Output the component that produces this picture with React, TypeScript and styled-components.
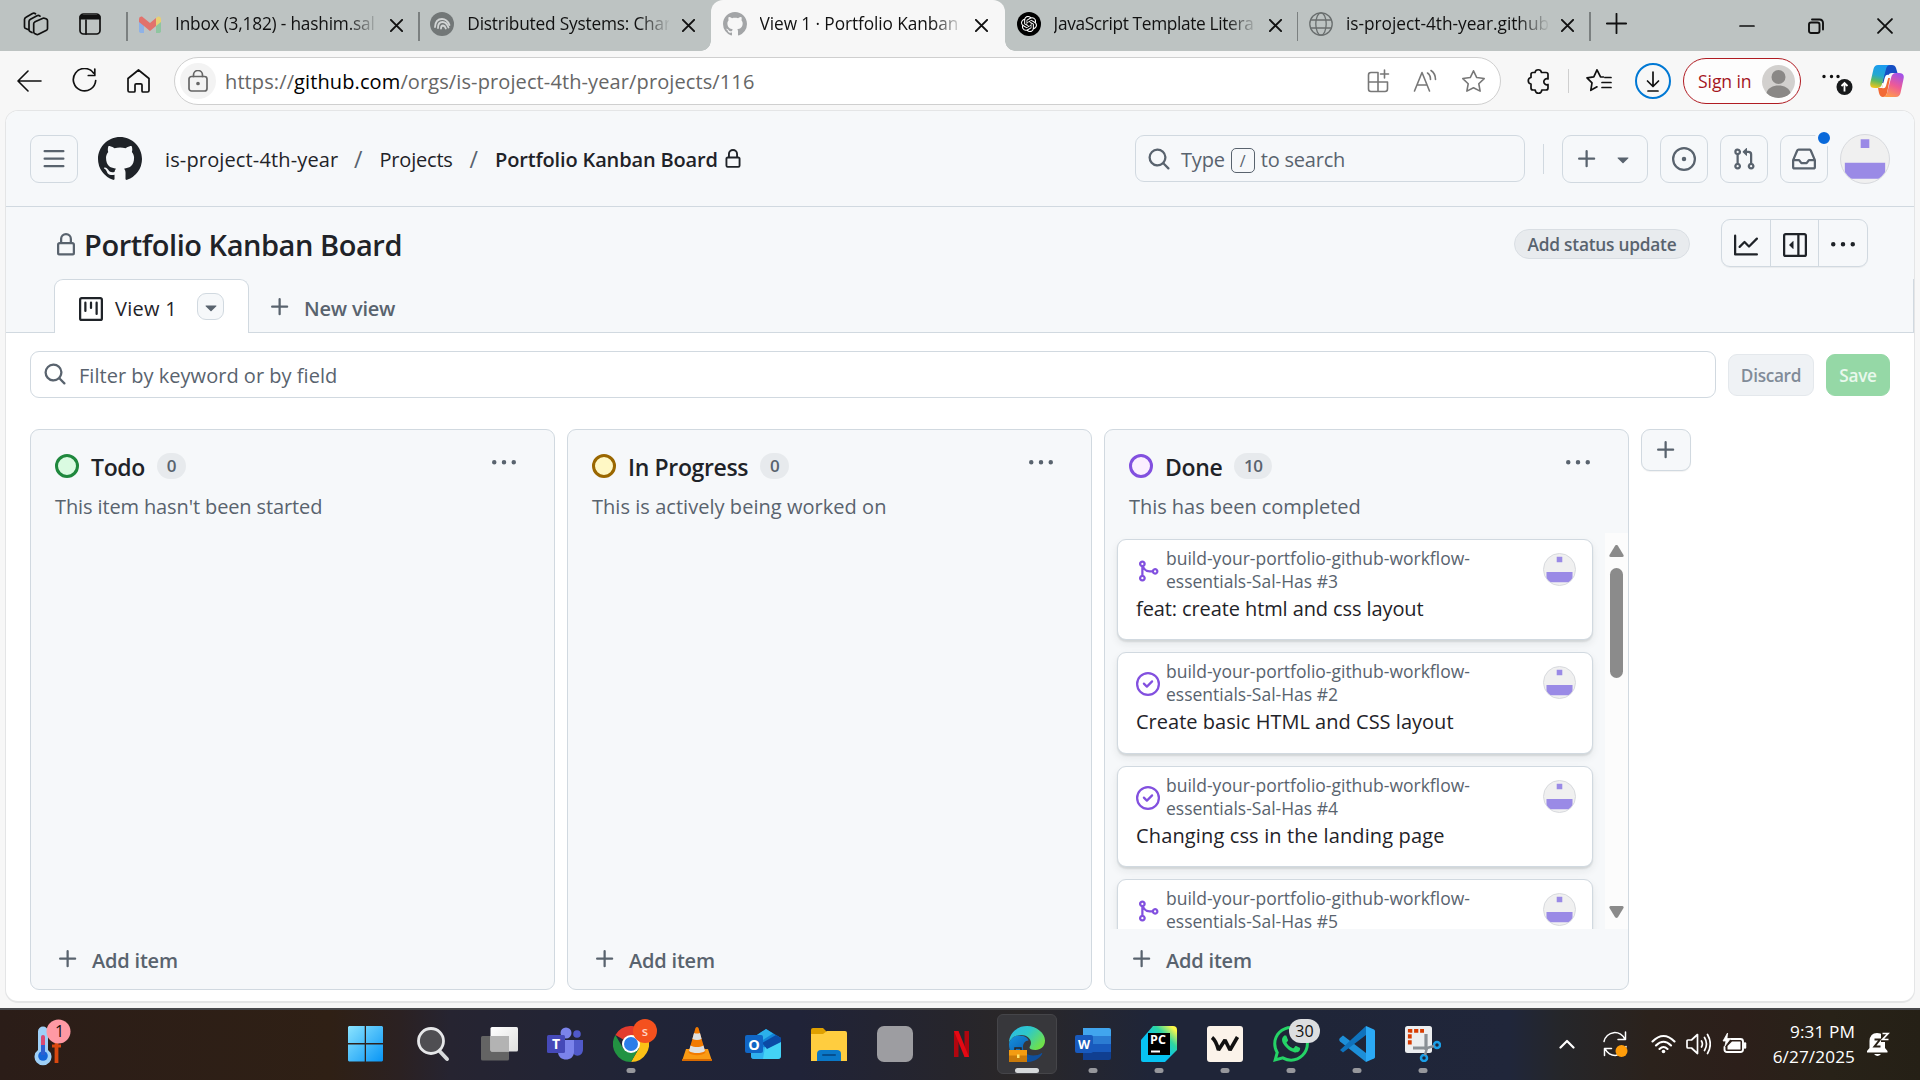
import React from "react";
import styled, { createGlobalStyle } from "styled-components";
import { SiOpenai, SiWhatsapp } from "react-icons/si";

const GlobalStyle = createGlobalStyle`
  * { box-sizing: border-box; }
  html, body { margin: 0; padding: 0; }
  body {
    width: 1920px;
    height: 1080px;
    overflow: hidden;
    background: #f7f7f7;
    font-family: "Open Sans", "Noto Sans", sans-serif;
    color: #1f2328;
  }
  svg { display: block; flex: none; }
`;

/* ---------- octicons ---------- */

const paths = {
  bars: "M1 2.75A.75.75 0 0 1 1.75 2h12.5a.75.75 0 0 1 0 1.5H1.75A.75.75 0 0 1 1 2.75Zm0 5A.75.75 0 0 1 1.75 7h12.5a.75.75 0 0 1 0 1.5H1.75A.75.75 0 0 1 1 7.75ZM1.75 12h12.5a.75.75 0 0 1 0 1.5H1.75a.75.75 0 0 1 0-1.5Z",
  plus: "M7.75 2a.75.75 0 0 1 .75.75V7h4.25a.75.75 0 0 1 0 1.5H8.5v4.25a.75.75 0 0 1-1.5 0V8.5H2.75a.75.75 0 0 1 0-1.5H7V2.75A.75.75 0 0 1 7.75 2Z",
  search: "M10.68 11.74a6 6 0 0 1-7.922-8.982 6 6 0 0 1 8.982 7.922l3.04 3.04a.749.749 0 0 1-.326 1.275.749.749 0 0 1-.734-.215ZM11.5 7a4.499 4.499 0 1 0-8.997 0A4.499 4.499 0 0 0 11.5 7Z",
  lock: "M4 4a4 4 0 0 1 8 0v2h.25c.966 0 1.75.784 1.75 1.75v5.5A1.75 1.75 0 0 1 12.25 15h-8.5A1.75 1.75 0 0 1 2 13.25v-5.5C2 6.784 2.784 6 3.75 6H4Zm8.25 3.5h-8.5a.25.25 0 0 0-.25.25v5.5c0 .138.112.25.25.25h8.5a.25.25 0 0 0 .25-.25v-5.5a.25.25 0 0 0-.25-.25ZM10.5 6V4a2.5 2.5 0 1 0-5 0v2Z",
  issue: "M8 9.5a1.5 1.5 0 1 0 0-3 1.5 1.5 0 0 0 0 3Z M8 0a8 8 0 1 1 0 16A8 8 0 0 1 8 0ZM1.5 8a6.5 6.5 0 1 0 13 0 6.5 6.5 0 0 0-13 0Z",
  pull: "M1.5 3.25a2.25 2.25 0 1 1 3 2.122v5.256a2.251 2.251 0 1 1-1.5 0V5.372A2.25 2.25 0 0 1 1.5 3.25Zm5.677-.177L9.573.677A.25.25 0 0 1 10 .854V2.5h1A2.5 2.5 0 0 1 13.5 5v5.628a2.251 2.251 0 1 1-1.5 0V5a1 1 0 0 0-1-1h-1v1.646a.25.25 0 0 1-.427.177L7.177 3.427a.25.25 0 0 1 0-.354ZM3.75 2.5a.75.75 0 1 0 0 1.5.75.75 0 0 0 0-1.5Zm0 9.5a.75.75 0 1 0 0 1.5.75.75 0 0 0 0-1.5Zm8.25.75a.75.75 0 1 0 1.5 0 .75.75 0 0 0-1.5 0Z",
  inbox: "M2.8 2.06A1.75 1.75 0 0 1 4.41 1h7.18c.7 0 1.333.417 1.61 1.06l2.74 6.395c.04.093.06.194.06.295v4.5A1.75 1.75 0 0 1 14.25 15H1.75A1.75 1.75 0 0 1 0 13.25v-4.5c0-.101.02-.202.06-.295Zm1.61.44a.25.25 0 0 0-.23.152L1.887 8H4.75a.75.75 0 0 1 .6.3L6.625 10h2.75l1.275-1.7a.75.75 0 0 1 .6-.3h2.863L11.82 2.652a.25.25 0 0 0-.23-.152Zm10.09 7h-2.875l-1.275 1.7a.75.75 0 0 1-.6.3h-3.5a.75.75 0 0 1-.6-.3L4.375 9.5H1.5v3.75c0 .138.112.25.25.25h12.5a.25.25 0 0 0 .25-.25Z",
  caret: "m4.427 7.427 3.396 3.396a.25.25 0 0 0 .354 0l3.396-3.396A.25.25 0 0 0 11.396 7H4.604a.25.25 0 0 0-.177.427Z",
  graph: "M1.5 1.75V13.5h13.75a.75.75 0 0 1 0 1.5H.75a.75.75 0 0 1-.75-.75V1.75a.75.75 0 0 1 1.5 0Zm14.28 2.53-5.25 5.25a.75.75 0 0 1-1.06 0L7 7.06 4.28 9.78a.751.751 0 0 1-1.042-.018.751.751 0 0 1-.018-1.042l3.25-3.25a.75.75 0 0 1 1.06 0L10 7.94l4.72-4.72a.751.751 0 0 1 1.042.018.751.751 0 0 1 .018 1.042Z",
  sidebar: "m4.177 7.823 2.396-2.396A.25.25 0 0 1 7 5.604v4.792a.25.25 0 0 1-.427.177L4.177 8.177a.25.25 0 0 1 0-.354Z M0 1.75C0 .784.784 0 1.75 0h12.5C15.216 0 16 .784 16 1.75v12.5A1.75 1.75 0 0 1 14.25 16H1.75A1.75 1.75 0 0 1 0 14.25Zm1.75-.25a.25.25 0 0 0-.25.25v12.5c0 .138.112.25.25.25H9.5v-13Zm12.5 13a.25.25 0 0 0 .25-.25V1.75a.25.25 0 0 0-.25-.25H11v13Z",
  kebab: "M8 9a1.5 1.5 0 1 0 0-3 1.5 1.5 0 0 0 0 3ZM1.5 9a1.5 1.5 0 1 0 0-3 1.5 1.5 0 0 0 0 3Zm13 0a1.5 1.5 0 1 0 0-3 1.5 1.5 0 0 0 0 3Z",
  project: "M1.75 0h12.5C15.216 0 16 .784 16 1.75v12.5A1.75 1.75 0 0 1 14.25 16H1.75A1.75 1.75 0 0 1 0 14.25V1.75C0 .784.784 0 1.75 0ZM1.5 1.75v12.5c0 .138.112.25.25.25h12.5a.25.25 0 0 0 .25-.25V1.75a.25.25 0 0 0-.25-.25H1.75a.25.25 0 0 0-.25.25ZM11.75 3a.75.75 0 0 1 .75.75v7.5a.75.75 0 0 1-1.5 0v-7.5a.75.75 0 0 1 .75-.75Zm-8.25.75a.75.75 0 0 1 1.5 0v5.5a.75.75 0 0 1-1.5 0ZM8 3a.75.75 0 0 1 .75.75v3.5a.75.75 0 0 1-1.5 0v-3.5A.75.75 0 0 1 8 3Z",
  merge: "M5.45 5.154A4.25 4.25 0 0 0 9.25 7.5h1.378a2.251 2.251 0 1 1 0 1.5H9.25A5.734 5.734 0 0 1 5 7.123v3.505a2.25 2.25 0 1 1-1.5 0V5.372a2.25 2.25 0 1 1 1.95-.218ZM4.25 13.5a.75.75 0 1 0 0-1.5.75.75 0 0 0 0 1.5Zm8.5-4.5a.75.75 0 1 0 0-1.5.75.75 0 0 0 0 1.5ZM5 3.25a.75.75 0 1 0 0 .005V3.25Z",
  closed: "M11.28 6.78a.75.75 0 0 0-1.06-1.06L7.25 8.69 5.78 7.22a.75.75 0 0 0-1.06 1.06l2 2a.75.75 0 0 0 1.06 0l3.5-3.5Z M16 8A8 8 0 1 1 0 8a8 8 0 0 1 16 0Zm-1.5 0a6.5 6.5 0 1 0-13 0 6.5 6.5 0 0 0 13 0Z",
  github: "M8 0c4.42 0 8 3.58 8 8a8.013 8.013 0 0 1-5.45 7.59c-.4.08-.55-.17-.55-.38 0-.27.01-1.13.01-2.2 0-.75-.25-1.23-.54-1.48 1.78-.2 3.65-.88 3.65-3.95 0-.88-.31-1.59-.82-2.15.08-.2.36-1.02-.08-2.12 0 0-.67-.22-2.2.82-.64-.18-1.32-.27-2-.27-.68 0-1.36.09-2 .27-1.53-1.03-2.2-.82-2.2-.82-.44 1.1-.16 1.92-.08 2.12-.51.56-.82 1.28-.82 2.15 0 3.06 1.86 3.75 3.64 3.95-.23.2-.44.55-.51 1.07-.46.21-1.61.55-2.33-.66-.15-.24-.6-.83-1.23-.82-.67.01-.27.38.01.53.34.19.73.9.82 1.13.16.45.68 1.31 2.69.94 0 .67.01 1.3.01 1.49 0 .21-.15.45-.55.38A7.995 7.995 0 0 1 0 8c0-4.42 3.58-8 8-8Z",
};

type IconName = keyof typeof paths;

const Octicon = ({ name, size = 24, color = "#59636e" }: { name: IconName; size?: number; color?: string }) => (
  <svg width={size} height={size} viewBox="0 0 16 16" fill={color} fillRule="evenodd">
    <path d={paths[name]} />
  </svg>
);

type LineProps = { w: number; h?: number; box?: string; sw?: number; color?: string; children: React.ReactNode };
const Line = ({ w, h = w, box, sw = 1.6, color = "#111", children }: LineProps) => (
  <svg
    width={w}
    height={h}
    viewBox={box ?? `0 0 ${w} ${h}`}
    fill="none"
    stroke={color}
    strokeWidth={sw}
    strokeLinecap="round"
    strokeLinejoin="round"
  >
    {children}
  </svg>
);

/* ---------- browser tab strip ---------- */

const Screen = styled.div`
  display: flex;
  flex-direction: column;
  width: 1920px;
  height: 1080px;
  overflow: hidden;
`;

const TabStrip = styled.div`
  display: flex;
  height: 51px;
  background: #bdc3c2;
`;

const StripTools = styled.div`
  display: flex;
  align-items: center;
  gap: 30px;
  width: 126px;
  padding: 0 0 3px 23px;
`;

const Tab = styled.div<{ $active?: boolean; $divider?: boolean }>`
  display: flex;
  align-items: center;
  position: relative;
  width: ${(p) => (p.$active ? 294 : 292.3)}px;
  height: 51px;
  padding: 0 0 3px 12px;
  color: #111;
  background: ${(p) => (p.$active ? "#f7f7f7" : "transparent")};
  border-radius: ${(p) => (p.$active ? "12px 12px 0 0" : "0")};
  &::before {
    content: "";
    position: absolute;
    left: 0;
    top: 12px;
    width: 1.5px;
    height: 29px;
    background: ${(p) => (p.$divider ? "#7b8080" : "transparent")};
  }
`;

const TabFlare = styled.i<{ $side: "left" | "right" }>`
  position: absolute;
  bottom: 0;
  ${(p) => p.$side}: -10px;
  width: 10px;
  height: 10px;
  background: radial-gradient(circle at ${(p) => (p.$side === "left" ? "0" : "100%")} 0, transparent 9.5px, #f7f7f7 10px);
`;

const TabIcon = styled.span`
  display: grid;
  place-items: center;
  width: 24px;
  height: 24px;
  flex: none;
`;

const TabLabel = styled.span<{ $spacing?: number }>`
  width: 202px;
  margin-left: 13px;
  white-space: nowrap;
  font-size: 17.3px;
  line-height: 30px;
  letter-spacing: ${(p) => p.$spacing ?? -0.2}px;
  mask-image: linear-gradient(90deg, #000 172px, transparent 204px);
`;

const TabClose = styled.span`
  display: grid;
  place-items: center;
  width: 24px;
  height: 24px;
  margin: 3px 0 0 7.5px;
`;

const NewTab = styled.div`
  display: flex;
  align-items: center;
  width: 150px;
  padding: 0 0 4px 16px;
  border-left: 1.5px solid transparent;
  position: relative;
  &::before {
    content: "";
    position: absolute;
    left: -1px;
    top: 12px;
    width: 1.5px;
    height: 29px;
    background: #7b8080;
  }
`;

const WindowButtons = styled.div`
  display: flex;
  align-items: center;
  gap: 53px;
  height: 51px;
`;

const CloseGlyph = ({ size = 13, sw = 1.8 }: { size?: number; sw?: number }) => (
  <Line w={size} sw={sw} box="0 0 12 12">
    <path d="M.8 .8 11.2 11.2M11.2 .8 .8 11.2" />
  </Line>
);

/* ---------- address bar ---------- */

const Toolbar = styled.div`
  display: flex;
  align-items: center;
  height: 59px;
  padding: 0 0 0 17px;
  background: #f7f7f7;
`;

const NavButtons = styled.div`
  display: flex;
  align-items: center;
  gap: 30px;
  width: 157px;
`;

const AddressBar = styled.div`
  display: flex;
  align-items: center;
  width: 1327px;
  height: 48px;
  padding: 0 13px 0 5px;
  margin-top: 1px;
  background: #fff;
  border: 1.5px solid #cfcfcf;
  border-radius: 24px;
`;

const SiteInfo = styled.span`
  display: grid;
  place-items: center;
  width: 36px;
  height: 36px;
  border-radius: 50%;
  background: #f3f3f3;
`;

const Url = styled.span`
  flex: 1;
  margin-left: 9px;
  font-size: 20px;
  letter-spacing: 0.11px;
  color: #666;
  white-space: nowrap;
  b { font-weight: 400; color: #000; }
`;

const AddressActions = styled.div`
  display: flex;
  align-items: center;
  gap: 23px;
`;

const ToolbarActions = styled.div`
  display: flex;
  align-items: center;
  margin-left: 25px;
  margin-top: 1px;
`;

const ToolbarRule = styled.i`
  width: 1px;
  height: 24px;
  margin: 0 17px 0 16px;
  background: #cfcfcf;
`;

const Download = styled.span`
  display: grid;
  place-items: center;
  width: 36px;
  height: 36px;
  margin-left: 23px;
  border: 2.5px solid #0078d4;
  border-radius: 50%;
`;

const SignIn = styled.div`
  display: flex;
  align-items: center;
  justify-content: space-between;
  width: 118px;
  height: 46px;
  margin-left: 12px;
  padding: 0 5px 0 14px;
  border: 1.5px solid #b01b22;
  border-radius: 23px;
  background: #fdfdfd;
  color: #a4161d;
  font-size: 17.6px;
  letter-spacing: -0.1px;
  white-space: nowrap;
`;

const MoreMenu = styled.span`
  margin: 4px 0 0 20px;
`;

const Copilot = styled.span`
  margin-left: 17px;
`;

/* ---------- github page ---------- */

const PageFrame = styled.div`
  height: 898px;
  padding: 0 5px 5px;
  background: #f7f7f7;
`;

const Page = styled.div`
  display: flex;
  flex-direction: column;
  width: 1910px;
  height: 893px;
  overflow: hidden;
  background: #fff;
  border: 1px solid #e4e5e6;
  border-bottom-width: 2px;
  border-radius: 13px;
`;

const GlobalHeader = styled.header`
  display: flex;
  align-items: flex-start;
  height: 96px;
  padding: 24px 24px 0 24px;
  background: #f6f8fa;
  border-bottom: 1.5px solid #d1d9e0;
`;

const IconButton = styled.button<{ $width?: number }>`
  display: flex;
  align-items: center;
  justify-content: center;
  gap: 12px;
  position: relative;
  flex: none;
  width: ${(p) => p.$width ?? 48}px;
  height: 48px;
  padding: 0;
  background: transparent;
  border: 1.5px solid #d1d9e0;
  border-radius: 9px;
`;

const Logo = styled.span`
  margin: 2px 0 0 20px;
`;

const Breadcrumbs = styled.nav`
  display: flex;
  align-items: center;
  height: 48px;
  margin-left: 23px;
  font-size: 20px;
  white-space: nowrap;
`;

const Crumb = styled.span<{ $width: number; $spacing: number; $current?: boolean }>`
  width: ${(p) => p.$width}px;
  font-weight: ${(p) => (p.$current ? 600 : 400)};
  letter-spacing: ${(p) => p.$spacing}px;
`;

const Slash = styled.span`
  width: 42.5px;
  padding-left: 17px;
  color: #59636e;
  font-size: 23px;
  line-height: 30px;
`;

const SearchBox = styled.div`
  display: flex;
  align-items: center;
  width: 390px;
  height: 47px;
  margin-left: auto;
  padding-left: 11px;
  border: 1.5px solid #d1d9e0;
  border-radius: 9px;
  color: #59636e;
  font-size: 20px;
  letter-spacing: -0.2px;
  white-space: nowrap;
`;

const SearchText = styled.span`
  margin: 2px 0 0 10px;
`;

const SearchTail = styled.span`
  margin-top: 2px;
`;

const Kbd = styled.kbd`
  display: grid;
  place-items: center;
  width: 24px;
  height: 25px;
  margin: 4px 6px 0;
  border: 1.5px solid #59636e;
  border-radius: 5px;
  font: 16px "Open Sans", sans-serif;
`;

const HeaderRule = styled.i`
  width: 1px;
  height: 30px;
  margin: 9px 18px 0;
  background: #d1d9e0;
`;

const HeaderActions = styled.div`
  display: flex;
  gap: 12px;
`;

const UnreadDot = styled.i`
  position: absolute;
  right: -6px;
  top: -7px;
  width: 18px;
  height: 18px;
  border: 3px solid #f6f8fa;
  border-radius: 50%;
  background: #0969da;
`;

const AvatarRing = styled.span<{ $size: number }>`
  display: block;
  flex: none;
  width: ${(p) => p.$size}px;
  height: ${(p) => p.$size}px;
  overflow: hidden;
  border: 1.5px solid #d8dade;
  border-radius: 50%;
  background: #f0f0f0;
  svg { width: 100%; height: 100%; }
`;

const Avatar = ({ size }: { size: number }) => (
  <AvatarRing $size={size}>
    <svg viewBox="0 0 50 50">
      <path fill="#9a8ae6" d="M20.5 4.5h9v9h-9zM4 29h42v16.5H4z" />
    </svg>
  </AvatarRing>
);

const AccountAvatar = styled.div`
  margin: -1px 0 0 0;
`;

const ProjectHeader = styled.div`
  display: flex;
  align-items: flex-start;
  height: 72px;
  padding: 12px 46px 0 48px;
  background: #f6f8fa;
`;

const ProjectTitle = styled.h1`
  display: flex;
  align-items: center;
  height: 49px;
  gap: 6px;
  margin: 1px auto 0 0;
  font-size: 29px;
  font-weight: 600;
  letter-spacing: -0.45px;
  white-space: nowrap;
`;

const StatusPill = styled.span`
  display: flex;
  align-items: center;
  justify-content: center;
  width: 176px;
  height: 30px;
  margin: 10px 31px 0 0;
  border: 1px solid #d9dee3;
  border-radius: 15px;
  background: #e8ebee;
  color: #59636e;
  font-size: 17.3px;
  font-weight: 600;
  letter-spacing: -0.23px;
  white-space: nowrap;
`;

const ButtonGroup = styled.div`
  display: flex;
  width: 147px;
  height: 48px;
  border: 1.5px solid #d1d9e0;
  border-radius: 9px;
  box-shadow: 0 1px 1px rgba(31, 35, 40, 0.06);
`;

const GroupButton = styled.span`
  display: grid;
  place-items: center;
  flex: 1;
  padding-top: 3px;
  & + & { border-left: 1.5px solid #d1d9e0; }
`;

const ViewTabs = styled.div`
  display: flex;
  height: 54px;
  padding-left: 48px;
  background: linear-gradient(#d1d9e0, #d1d9e0) 0 100% / 100% 1.5px no-repeat, #f6f8fa;
  border-right: 1.5px solid #d1d9e0;
`;

const ViewTab = styled.div`
  display: flex;
  align-items: center;
  width: 195px;
  height: 54px;
  padding: 4px 0 0 24px;
  background: #fff;
  border: 1.5px solid #d1d9e0;
  border-bottom: 0;
  border-radius: 9px 9px 0 0;
  font-size: 20px;
  white-space: nowrap;
`;

const ViewName = styled.span`
  width: 82px;
  padding-left: 12px;
  letter-spacing: 0.25px;
`;

const ViewMenu = styled.span`
  display: grid;
  place-items: center;
  width: 27px;
  height: 27px;
  margin: -4px 0 0 12px;
  border: 1.5px solid #d1d9e0;
  border-radius: 9px;
  background: #f6f8fa;
`;

const NewView = styled.div`
  display: flex;
  align-items: center;
  gap: 12px;
  padding: 4px 0 0 19px;
  color: #59636e;
  font-size: 20px;
  font-weight: 600;
  letter-spacing: -0.2px;
  white-space: nowrap;
  svg { margin-top: -3px; }
`;

const FilterRow = styled.div`
  display: flex;
  align-items: center;
  gap: 12px;
  height: 47px;
  margin: 18px 23px 0 24px;
`;

const FilterInput = styled.div`
  display: flex;
  align-items: center;
  gap: 12px;
  width: 1686px;
  height: 47px;
  padding: 1px 0 0 12px;
  border: 1.5px solid #d1d9e0;
  border-radius: 9px;
  color: #59636e;
  font-size: 20px;
  letter-spacing: 0.02px;
  white-space: nowrap;
  svg { margin-top: -2px; }
`;

const FilterButton = styled.button<{ $primary?: boolean }>`
  width: ${(p) => (p.$primary ? 64 : 86)}px;
  height: 42px;
  padding: 1px 0 0;
  border: 1px solid ${(p) => (p.$primary ? "#95d8a6" : "#e4e8ec")};
  border-radius: 9px;
  background: ${(p) => (p.$primary ? "#95d8a6" : "#eff2f5")};
  color: ${(p) => (p.$primary ? "#e9f8ed" : "#818b98")};
  font-family: inherit;
  font-size: 17.2px;
  font-weight: 600;
  letter-spacing: -0.3px;
`;

const Board = styled.main`
  display: flex;
  gap: 12px;
  margin: 31px 0 0 24px;
`;

const ColumnBox = styled.section`
  display: flex;
  flex-direction: column;
  width: 525px;
  height: 561px;
  overflow: hidden;
  border: 1.5px solid #d1d9e0;
  border-radius: 9px;
  background: #f6f8fa;
`;

const ColumnHead = styled.div`
  display: flex;
  align-items: center;
  height: 33px;
  margin: 19px 38px 0 24px;
`;

const StatusDot = styled.i<{ $ring: string; $fill: string }>`
  width: 24px;
  height: 24px;
  flex: none;
  border: 3px solid ${(p) => p.$ring};
  border-radius: 50%;
  background: ${(p) => p.$fill};
`;

const ColumnName = styled.h2`
  margin: 3px 12px 0 12px;
  font-size: 23px;
  font-weight: 600;
  letter-spacing: -0.35px;
  white-space: nowrap;
`;

const Count = styled.span`
  display: grid;
  place-items: center;
  height: 26px;
  padding: 0 9.7px;
  border-radius: 13px;
  background: #e7eaed;
  color: #59636e;
  font-size: 17px;
  font-weight: 600;
  letter-spacing: -0.4px;
`;

const HeadMenu = styled.span`
  margin: -6px 0 0 auto;
`;

const ColumnNote = styled.p<{ $spacing: number }>`
  height: 30px;
  margin: 10px 0 0 24px;
  color: #59636e;
  font-size: 20px;
  line-height: 30px;
  letter-spacing: ${(p) => p.$spacing}px;
  white-space: nowrap;
`;

const ColumnBody = styled.div`
  display: flex;
  justify-content: space-between;
  height: 396px;
  margin-top: 11px;
  overflow: hidden;
`;

const CardList = styled.div`
  display: flex;
  flex-direction: column;
  gap: 12px;
  padding: 6px 0 0 12px;
`;

const Card = styled.article`
  flex: none;
  width: 476px;
  height: 101.3px;
  padding: 7px 17px 0 18px;
  border: 1.5px solid #d1d9e0;
  border-radius: 9px;
  background: #fff;
  box-shadow: 0 1.5px 1.5px rgba(31, 35, 40, 0.1), 0 4px 8px rgba(31, 35, 40, 0.08);
`;

const CardTop = styled.div`
  display: flex;
  align-items: flex-start;
`;

const CardIcon = styled.span`
  margin: 12px 6px 0 0;
`;

const CardRepo = styled.span`
  width: 340px;
  color: #59636e;
  font-size: 17.5px;
  line-height: 23px;
`;

const CardAvatar = styled.span`
  margin: 6px -1px 0 auto;
`;

const CardTitle = styled.h3<{ $spacing: number }>`
  margin: 2px 0 0 0;
  font-size: 20px;
  font-weight: 400;
  line-height: 28px;
  letter-spacing: ${(p) => p.$spacing}px;
  white-space: nowrap;
`;

const Scrollbar = styled.div`
  display: flex;
  flex-direction: column;
  align-items: center;
  width: 23px;
  height: 396px;
  padding: 12px 0 11px;
  background: #fcfcfc;
`;

const Thumb = styled.i`
  width: 13px;
  height: 110px;
  margin: 11px 0 auto;
  border-radius: 7px;
  background: #8b8b8b;
`;

const AddItem = styled.div`
  display: flex;
  align-items: center;
  gap: 12px;
  height: 60px;
  padding: 2px 0 0 25px;
  color: #59636e;
  font-size: 20px;
  font-weight: 600;
  letter-spacing: -0.2px;
  svg { margin-top: -2px; }
`;

const AddColumn = styled.button`
  display: grid;
  place-items: center;
  width: 50px;
  height: 42px;
  padding: 0;
  border: 1.5px solid #d1d9e0;
  border-radius: 9px;
  background: #f6f8fa;
  box-shadow: 0 1px 1px rgba(31, 35, 40, 0.06);
`;

type CardData = { icon: IconName; ref: number; title?: string; spacing?: number };

const cards: CardData[] = [
  { icon: "merge", ref: 3, title: "feat: create html and css layout", spacing: -0.1 },
  { icon: "closed", ref: 2, title: "Create basic HTML and CSS layout", spacing: 0.02 },
  { icon: "closed", ref: 4, title: "Changing css in the landing page", spacing: 0.14 },
  { icon: "merge", ref: 5 },
];

type ColumnData = { name: string; count: number; note: string; spacing: number; ring: string; fill: string; cards: CardData[] };

const columns: ColumnData[] = [
  { name: "Todo", count: 0, note: "This item hasn't been started", spacing: -0.12, ring: "#1f883d", fill: "#dafbe1", cards: [] },
  { name: "In Progress", count: 0, note: "This is actively being worked on", spacing: 0.04, ring: "#9a6700", fill: "#fff8c5", cards: [] },
  { name: "Done", count: 10, note: "This has been completed", spacing: -0.04, ring: "#8250df", fill: "#fbefff", cards },
];

const Column = ({ data }: { data: ColumnData }) => (
  <ColumnBox>
    <ColumnHead>
      <StatusDot $ring={data.ring} $fill={data.fill} />
      <ColumnName>{data.name}</ColumnName>
      <Count>{data.count}</Count>
      <HeadMenu><Octicon name="kebab" /></HeadMenu>
    </ColumnHead>
    <ColumnNote $spacing={data.spacing}>{data.note}</ColumnNote>
    <ColumnBody>
      {data.cards.length > 0 && (
        <>
          <CardList>
            {data.cards.map((c) => (
              <Card key={c.ref}>
                <CardTop>
                  <CardIcon><Octicon name={c.icon} color="#8250df" /></CardIcon>
                  <CardRepo>build-your-portfolio-github-workflow-<br />essentials-Sal-Has #{c.ref}</CardRepo>
                  <CardAvatar><Avatar size={33} /></CardAvatar>
                </CardTop>
                {c.title && <CardTitle $spacing={c.spacing ?? 0}>{c.title}</CardTitle>}
              </Card>
            ))}
          </CardList>
          <Scrollbar>
            <svg width="15" height="12"><path d="M7.5 0c.8 0 1.3.6 1.7 1.2L14.5 10c.5 1-.1 2-1.2 2H1.7C.6 12 0 11 .5 10L5.8 1.2C6.2.6 6.7 0 7.5 0Z" fill="#8b8b8b" /></svg>
            <Thumb />
            <svg width="15" height="12"><path d="M7.5 12c.8 0 1.3-.6 1.7-1.2L14.5 2c.5-1-.1-2-1.2-2H1.7C.6 0 0 1 .5 2L5.8 10.800C6.2 11.4 6.7 12 7.500 12Z" fill="#8b8b8b" /></svg>
          </Scrollbar>
        </>
      )}
    </ColumnBody>
    <AddItem><Octicon name="plus" />Add item</AddItem>
  </ColumnBox>
);

/* ---------- taskbar ---------- */

const Taskbar = styled.footer`
  display: flex;
  align-items: center;
  height: 72px;
  padding-bottom: 2px;
  border-top: 2px solid #48484b;
  background: linear-gradient(90deg, #2b1d18 0, #2f2015 330px, #2b2122 400px, #262431 450px, #202437 640px, #202338 800px, #26252c 950px, #2a2727 1020px, #242631 1090px, #1f2538 1150px, #1f2538 1300px, #20263a 1510px, #25262a 1560px, #2b221c 1650px, #2c1f1a 1740px, #282218 1830px, #252016 1920px);
`;

const Weather = styled.div`
  width: 334px;
  padding: 0 0 4px 32px;
`;

const Apps = styled.div`
  display: flex;
`;

const AppSlot = styled.div<{ $active?: boolean }>`
  display: grid;
  place-items: center;
  position: relative;
  width: 60px;
  height: 60px;
  margin: 0 3px;
  border: 1px solid ${(p) => (p.$active ? "#454549" : "transparent")};
  border-radius: 6px;
  background: ${(p) => (p.$active ? "#37373b" : "transparent")};
`;

const RunMark = styled.i<{ $active?: boolean }>`
  position: absolute;
  bottom: 0;
  left: 50%;
  width: ${(p) => (p.$active ? 24 : 9)}px;
  height: 5px;
  transform: translateX(-50%);
  border-radius: 3px;
  background: ${(p) => (p.$active ? "#d6d9da" : "#96979c")};
`;

const Badge = styled.span<{ $tone: "red" | "grey"; $wide?: boolean }>`
  display: grid;
  place-items: center;
  position: absolute;
  top: 4px;
  left: ${(p) => (p.$wide ? 27 : 31)}px;
  width: ${(p) => (p.$wide ? 31 : 24)}px;
  height: 24px;
  border-radius: 12px;
  background: ${(p) => (p.$tone === "red" ? "#f4511e" : "#dcdee0")};
  color: ${(p) => (p.$tone === "red" ? "#ffd2c2" : "#111")};
  font-size: ${(p) => (p.$tone === "red" ? 13 : 16)}px;
  font-weight: ${(p) => (p.$tone === "red" ? 600 : 400)};
  line-height: 24px;
`;

const Tray = styled.div`
  display: flex;
  align-items: center;
  margin-left: auto;
  padding-right: 30px;
`;

const TrayItem = styled.span<{ $gap: number }>`
  margin-left: ${(p) => p.$gap}px;
`;

const Clock = styled.div`
  width: 100px;
  margin: 1px 12px 0 8px;
  color: #fff;
  font-size: 17.2px;
  line-height: 24.5px;
  letter-spacing: 0.1px;
  text-align: right;
`;

const Windows = () => (
  <svg width="38" height="36" viewBox="0 0 38 36">
    <defs><linearGradient id="win" x1="0" y1="0" x2="1" y2="1"><stop stopColor="#8be4ff" /><stop offset="1" stopColor="#0895f5" /></linearGradient></defs>
    <path fill="url(#win)" d="M1 0h15.7v17H0V1zM18 0h16l1 1v16H18zM0 18.5h16.7V35.500H1l-1-1zM18 18.500h17V34.500l-1 1H18z" />
  </svg>
);
const Search = () => (
  <svg width="36" height="36" viewBox="0 0 36 36" fill="none">
    <path d="m24 24.5 8 8.500" stroke="#d8dadc" strokeWidth="4" strokeLinecap="round" />
    <circle cx="16" cy="15" r="12.500" fill="#4f4e52" stroke="#e6e7e9" strokeWidth="2.800" />
  </svg>
);
const TaskView = () => (
  <svg width="37" height="36" viewBox="0 0 37 36">
    <defs><linearGradient id="tv" x2="1" y2="1"><stop stopColor="#fff" /><stop offset="1" stopColor="#dedede" /></linearGradient></defs>
    <rect y="10" width="28" height="24.500" rx="1.500" fill="#646464" /><rect x="9.500" y="1" width="27.500" height="24.500" rx="1.500" fill="url(#tv)" /><path d="M9.500 10H28v15.500H11a1.500 1.500 0 0 1-1.500-1.500Z" fill="#b3b3b3" />
  </svg>
);
const Teams = () => (
  <svg width="36" height="34" viewBox="0 0 36 34">
    <circle cx="30" cy="7" r="3.800" fill="#5059c9" /><path d="M26 13h10v9c0 8-8 8-10 4Z" fill="#5059c9" />
    <circle cx="19" cy="6" r="5.500" fill="#7b83eb" /><path d="M11 13h16v12c0 10-16 10-16 0Z" fill="#7b83eb" />
    <rect y="8" width="18" height="18" rx="1.500" fill="#4549b8" /><text x="9" y="22" fill="#fff" fontSize="14" fontWeight="700" textAnchor="middle">T</text>
  </svg>
);
const Chrome = () => (
  <svg width="36" height="36" viewBox="0 0 36 36">
    <path d="M18 18 2.400 9A18 18 0 0 1 33.600 9Z" fill="#e33b2e" /><path d="M18 9h15.600A18 18 0 0 1 18 36l7.800-13.500Z" fill="#fbc116" /><path d="M2.400 9A18 18 0 0 0 18 36l7.800-13.500L18 27l-7.800-4.500Z" fill="#229342" />
    <circle cx="18" cy="18" r="9" fill="#fff" /><circle cx="18" cy="18" r="7" fill="#2b7de9" />
  </svg>
);
const Vlc = () => (
  <svg width="30" height="34" viewBox="0 0 30 34">
    <path d="M4 22h22l4 12H0z" fill="#f99a14" /><path d="M0 32h30v2H0Z" fill="#d96a00" /><path d="M13.500 1q1.500-2 3 0l7 24.500c-3 3.500-14 3.500-17 0Z" fill="#f27a00" />
    <path d="m12 6-1.600 6c3 1.300 6.200 1.300 9.200 0L18 6c-2 .8-4 .8-6 0ZM8.500 18.500 7 24c4 2.800 12 2.800 16 0l-1.500-5.500c-4 2-9 2-13 0Z" fill="#dfe0e0" />
  </svg>
);
const Outlook = () => (
  <svg width="37" height="31" viewBox="0 0 37 31">
    <path d="M6 10 21 0l15 9v18c0 2-1.500 3-3 3H9c-2 0-3-1-3-3Z" fill="#1284d8" /><path d="M6 10 21 0l7 4.500L10 16Z" fill="#2bb0ea" /><path d="m20 18 16-9v18c0 2-1.500 3-3 3H14Z" fill="#43d2f5" /><path d="m17 14 14-8 5 3v4L22 20Z" fill="#0b4aa5" /><path d="M6 20v7c0 2 1 3 3 3h9L20 18Z" fill="#2fb0ee" />
    <rect y="6" width="18" height="18" rx="2" fill="#1066c5" /><text x="9" y="20.500" fill="#fff" fontSize="14.500" fontWeight="700" textAnchor="middle">O</text>
  </svg>
);
const Explorer = () => (
  <svg width="36" height="33" viewBox="0 0 36 33">
    <path d="M0 2q0-2 2-2h10l4 4v6H0Z" fill="#dfa000" /><path d="M0 6h12l4-3h18q2 0 2 2v28H0Z" fill="#ffcd3f" /><path d="M6 33v-7q0-4 4-4h16q4 0 4 4v7Z" fill="#0a78c8" /><rect x="11" y="26" width="14" height="2" rx="1" fill="#054f8f" />
  </svg>
);
const Blank = () => <svg width="36" height="36"><rect width="36" height="36" rx="7" fill="#9d9da1" /></svg>;
const Netflix = () => (
  <svg width="15" height="26" viewBox="0 0 15 26"><path d="M0 0h4.500v26L0 26ZM10.500 0H15v26h-4.500Z" fill="#b1060f" /><path d="M0 0h4.500L15 26h-4.500Z" fill="#e50914" /></svg>
);
const Edge = () => (
  <svg width="36" height="36" viewBox="0 0 36 36">
    <defs>
      <linearGradient id="eg" x2="1" y2=".6"><stop stopColor="#2cb8e8" /><stop offset=".5" stopColor="#2ec9c9" /><stop offset="1" stopColor="#6fe04b" /></linearGradient>
      <linearGradient id="eb" x2=".6" y2="1"><stop stopColor="#1593df" /><stop offset="1" stopColor="#0b57ad" /></linearGradient>
    </defs>
    <path d="M13 20c0 6 5 9.500 11 9.500 3.500 0 6.500-1 8.300-2.300.8-.4 1.200.3.700 1C30 33 24.500 36 18 36c-6 0-10-6-8-13Z" fill="#0f4f9c" />
    <path d="M0 18c1-5 5-8.500 10-8.500 6 0 9.500 3 9.500 5-3.500 0-5.500 3-5.500 6.500 0 5.500 3 9 6 11.500L12 35C5 33 0 27 0 18Z" fill="url(#eb)" />
    <path d="M0 17C0 7 8 0 18 0s18 7.500 18 14.500c0 6-4.500 9.500-9.500 9.500-4 0-6-1.200-6-2.500 0-1 1.500-2 1.500-4.500 0-4.500-4.500-8-10-8C6 9 1.500 12.500 0 17Z" fill="url(#eg)" />
    <path d="M0 24h18v12H0Z" fill="#c97a0a" /><path d="M0 24h18v5.500H0Z" fill="#f39c12" /><path d="M6 24v-2h6v2" stroke="#2a2320" fill="none" strokeWidth="1.500" /><rect x="8" y="28.500" width="2.500" height="3.500" fill="#ffe36b" />
  </svg>
);
const Word = () => (
  <svg width="36" height="32" viewBox="0 0 36 32">
    <path d="M8 0h26q2 0 2 2v6H8Z" fill="#41a5ee" /><path d="M8 8h28v8H8Z" fill="#2b7cd3" /><path d="M8 16h28v8H8Z" fill="#185abd" /><path d="M8 24h28v6q0 2-2 2H8Z" fill="#103f91" />
    <rect y="7" width="18" height="18" rx="2" fill="#185abd" /><text x="9" y="20.500" fill="#fff" fontSize="12.500" fontWeight="700" textAnchor="middle">W</text>
  </svg>
);
const PyCharm = () => (
  <svg width="36" height="36" viewBox="0 0 36 36">
    <defs><linearGradient id="pc" x1="0" y1="1" x2="1" y2="0"><stop offset=".45" stopColor="#07c3f2" /><stop offset=".7" stopColor="#2fd6a0" /><stop offset=".92" stopColor="#fcf84a" /></linearGradient></defs>
    <path d="M12 0h20q4 0 4 4v20L24 36H2q-2 0-2-2V14Z" fill="url(#pc)" /><path d="M7 7h22v22H7Z" fill="#000" />
    <text x="17" y="18" fill="#fff" fontSize="12.500" fontWeight="700" textAnchor="middle">PC</text><path d="M10 24.500h9v2h-9Z" fill="#fff" />
  </svg>
);
const Wattpad = () => (
  <svg width="36" height="36"><rect width="36" height="36" rx="3" fill="#fbf3ea" /><path d="M5 11.500q4 3 6.500 12.500L18 14l5 10 7.500-13" fill="none" stroke="#111" strokeWidth="3.600" strokeLinejoin="bevel" /></svg>
);
const VsCode = () => (
  <svg width="36" height="36" viewBox="0 0 36 36">
    <path d="m1 12 3-2.500L27 27v9L1 15.500Q-.5 13.500 1 12Z" fill="#1d8fd8" /><path d="m1 24 26-24v9L4 26.500 1 24Q-.5 22 1 24Z" fill="#0f73bd" /><path d="m27 0 8 3.500q1 .5 1 1.500v26q0 1-1 1.500L27 36Z" fill="#2ba9f5" />
  </svg>
);
const Snip = () => (
  <svg width="36" height="36" viewBox="0 0 36 36">
    <rect width="27" height="27" rx="2.500" fill="#eceef0" /><path d="M4.800 18.500V4.800H19" stroke="#d83b01" strokeWidth="3.800" strokeDasharray="4.200 1.800" fill="none" /><path d="M8 22h14M21 8v16" stroke="#8a9096" strokeWidth="3.200" /><circle cx="32" cy="19" r="3" stroke="#1a9fe8" strokeWidth="2.500" fill="none" /><circle cx="19" cy="32" r="3" stroke="#1a9fe8" strokeWidth="2.500" fill="none" /><path d="m22 22 7-2M22 22l-2 7" stroke="#8a9096" strokeWidth="2.500" />
  </svg>
);

type App = { key: string; icon: React.ReactNode; run?: boolean; active?: boolean; badge?: string; tone?: "red" | "grey" };

const apps: App[] = [
  { key: "start", icon: <Windows /> },
  { key: "search", icon: <Search /> },
  { key: "taskview", icon: <TaskView /> },
  { key: "teams", icon: <Teams /> },
  { key: "chrome", icon: <Chrome />, run: true, badge: "s", tone: "red" },
  { key: "vlc", icon: <Vlc /> },
  { key: "outlook", icon: <Outlook /> },
  { key: "explorer", icon: <Explorer /> },
  { key: "blank", icon: <Blank /> },
  { key: "netflix", icon: <Netflix /> },
  { key: "edge", icon: <Edge />, run: true, active: true },
  { key: "word", icon: <Word />, run: true },
  { key: "pycharm", icon: <PyCharm />, run: true },
  { key: "w", icon: <Wattpad />, run: true },
  { key: "whatsapp", icon: <SiWhatsapp size={36} color="#25d366" />, run: true, badge: "30", tone: "grey" },
  { key: "vscode", icon: <VsCode />, run: true },
  { key: "snip", icon: <Snip />, run: true },
];

const Star = "M12 2.5l2.9 6 6.6.9-4.8 4.6 1.2 6.6L12 17.500l-5.900 3.100 1.200-6.600L2.500 9.400l6.600-.9Z";

export default function App() {
  return (
    <Screen>
      <GlobalStyle />
      <TabStrip>
        <StripTools>
          <Line w={26} h={30} box="0 -1 26 26" sw={1.7}>
            <path d="M5 17.5 2.700 16.500A1.500 1.500 0 0 1 1.500 15V7.500Q1.500 6 3 5.200L9.500 1.500q1.500-.8 3 .3M9 20.500l-2-1Q6 19 6 17.500V9.500Q6 8 7.500 7.200L14 3.800q1.600-.8 3 .4M12 9.800l8-3.600q1-.4 2.200.2l1.300.7q1 .6 1 1.700v8q0 1-1 1.500l-8 4q-1.200.6-2.300 0l-1.500-.8q-1-.6-1-1.800v-8q0-1.200 1.300-1.700Z" />
          </Line>
          <Line w={22} h={22} sw={1.7}><rect x="1" y="1" width="20" height="20" rx="3.500" /><path d="M2 3.500h18M2 5h18" strokeWidth="3" /><path d="M7 7v14" /></Line>
        </StripTools>
        <Tab $divider>
          <TabIcon><svg width="22" height="17" viewBox="0 0 22 17"><path fill="#8fb2e6" d="M0 3h5v14H1.500L0 16Z" /><path fill="#8fc5a0" d="M17 3h5v13l-1.500 1H17Z" /><path fill="#e8cf74" d="M17 2l2-1.500Q22 0 22 3v3l-5 4Z" /><path fill="#e2726c" d="M0 3Q0 0 3 .5L11 7l6-5v8l-6 5-6-5-5-4Z" /></svg></TabIcon>
          <TabLabel $spacing={-0.2}>Inbox (3,182) - hashim.sal</TabLabel>
          <TabClose><CloseGlyph /></TabClose>
        </Tab>
        <Tab $divider>
          <TabIcon><svg width="24" height="24" viewBox="0 0 24 24" fill="none" stroke="#d2d5d5" strokeWidth="1.800" strokeLinecap="round"><circle cx="12" cy="12" r="12" fill="#727777" stroke="none" /><path d="M5 15q.5-8 7-8 5 0 7.500 6M8 16q0-6 4.500-6 4 0 6 5.500M11 16.500q0-3 2-3 2 .3 2.800 3" /></svg></TabIcon>
          <TabLabel $spacing={-0.2}>Distributed Systems: Char</TabLabel>
          <TabClose><CloseGlyph /></TabClose>
        </Tab>
        <Tab $active>
          <TabFlare $side="left" />
          <TabFlare $side="right" />
          <TabIcon><Octicon name="github" color="#a3a5a7" /></TabIcon>
          <TabLabel $spacing={-0.1}>View 1 · Portfolio Kanban</TabLabel>
          <TabClose><CloseGlyph /></TabClose>
        </Tab>
        <Tab>
          <TabIcon><svg width="24" height="24"><circle cx="12" cy="12" r="12" fill="#000" /><foreignObject x="4" y="4" width="16" height="16"><SiOpenai size={16} color="#fff" /></foreignObject></svg></TabIcon>
          <TabLabel $spacing={-0.35}>JavaScript Template Litera</TabLabel>
          <TabClose><CloseGlyph /></TabClose>
        </Tab>
        <Tab $divider>
          <TabIcon><Line w={24} sw={1.3} color="#696e6e"><circle cx="12" cy="12" r="11.200" /><ellipse cx="12" cy="12" rx="5.200" ry="11.200" /><path d="M2 8h20M2 16h20" /></Line></TabIcon>
          <TabLabel $spacing={-0.02}>is-project-4th-year.github</TabLabel>
          <TabClose><CloseGlyph /></TabClose>
        </Tab>
        <NewTab><Line w={21} sw={1.8}><path d="M10.500 .8v19.400M.8 10.500h19.400" /></Line></NewTab>
        <WindowButtons>
          <Line w={16} sw={1.7}><path d="M1 8h14" /></Line>
          <Line w={16} sw={1.9}><rect x="1" y="4.500" width="10.500" height="10.500" rx="2" /><path d="M4 1.500h7.500q3.500 0 3.500 3.500v6.500" /></Line>
          <CloseGlyph size={16} sw={1.4} />
        </WindowButtons>
      </TabStrip>

      <Toolbar>
        <NavButtons>
          <Line w={25} h={22}><path d="M24 11H1.500M11 1 1 11l10 10" /></Line>
          <Line w={25} h={25} sw={1.7}><path d="M21.500 5A11.200 11.200 0 1 0 23.700 12.500M22.800 1v6.500h-6.500" /></Line>
          <Line w={23} h={24} sw={1.7}><path d="M1 9.500 11.500 1 22 9.500V21.500q0 1.500-1.500 1.500H16q-1 0-1-1v-6q0-1.200-1.200-1.200H9.200Q8 14.800 8 16v6q0 1-1 1H2.500Q1 23 1 21.500Z" /></Line>
        </NavButtons>
        <AddressBar>
          <SiteInfo><Line w={20} h={22} sw={1.7} color="#666"><rect x="1" y="6.500" width="18" height="14.500" rx="2.500" /><path d="M5.500 6.500V5a4.500 4.500 0 0 1 9 0v1.500" /><circle cx="10" cy="13.500" r="1" fill="#666" /></Line></SiteInfo>
          <Url>https://<b>github.com</b>/orgs/is-project-4th-year/projects/116</Url>
          <AddressActions>
            <Line w={23} h={24} color="#777"><path d="M11 3.500H4Q1.500 3.500 1.500 6v14q0 2.500 2.500 2.500h14q2.500 0 2.500-2.500v-7H1.500M11 3.500v19M17.500 1v8M13.500 5h8" /></Line>
            <Line w={24} h={24} color="#777"><path d="M1.500 22 9 3.500 16.500 22M4 16h10M14.500 4q3 2 3 6.500M18 1.500q4.500 3 4.500 9" /></Line>
            <Line w={27} h={27} box="0 0 24 24" sw={1.4} color="#777"><path d={Star} /></Line>
          </AddressActions>
        </AddressBar>
        <ToolbarActions>
          <Line w={26} h={26} sw={1.7}><path d="M9 4.500a3.300 3.300 0 0 1 6.500 0h4.500q2 0 2 2V11a3 3 0 1 0 0 5.500V20q0 2-2 2h-4.200a3.300 3.300 0 0 1-6.600 0H7q-2 0-2-2v-4a3.300 3.300 0 0 1 0-6.500v-3q0-2 2-2Z" /></Line>
          <ToolbarRule />
          <Line w={26} h={26} sw={1.7}><path d="m17.500 9-3-.2L11 1.800 7.800 8.800 1 9.800l5 5-1.200 7.500 6.200-3.500M16 14.500h9M16 19.500h9M19 9.500h6" /></Line>
          <Download><Line w={14} h={21} sw={1.7}><path d="M7 1v14M1.500 10 7 15.500 12.500 10M2 20h10" /></Line></Download>
          <SignIn>Sign in<svg width="33" height="33" viewBox="0 0 33 33"><circle cx="16.500" cy="16.500" r="16.500" fill="#d2d0ce" /><circle cx="16.500" cy="12" r="7" fill="#8a8886" /><path d="M4.500 28c2-10 22-10 24 0-7 6.500-17 6.500-24 0Z" fill="#8a8886" /></svg></SignIn>
          <MoreMenu><svg width="32" height="30" viewBox="0 0 32 30"><path d="M3 8.500h.01M10.500 8.500h.01M17 8.500h.01" stroke="#111" strokeWidth="3.400" strokeLinecap="round" /><circle cx="23.500" cy="19" r="9.500" fill="#f7f7f7" /><circle cx="23.500" cy="19" r="8" fill="#17191b" /><path d="M23.500 23.500v-8M20.500 18l3-3 3 3" stroke="#fff" strokeWidth="1.800" fill="none" /></svg></MoreMenu>
          <Copilot>
            <svg width="34" height="32" viewBox="0 0 34 32">
              <defs>
                <linearGradient id="c1" x1=".5" y1="0" x2=".3" y2="1"><stop stopColor="#1a9bf0" /><stop offset=".45" stopColor="#24a8d0" /><stop offset=".7" stopColor="#5dba60" /><stop offset="1" stopColor="#f0c419" /></linearGradient>
                <linearGradient id="c2" x1=".7" y1="0" x2=".3" y2="1"><stop stopColor="#a352e8" /><stop offset=".5" stopColor="#ee5a97" /><stop offset="1" stopColor="#ff9c4a" /></linearGradient>
              </defs>
              <path d="M16 0h6q3 0 4 3l1.500 5H22q-3 0-4 3l-2 7H12Z" fill="#164fc4" />
              <path d="M8 0h12q-3 0-4 4l-4 15q-1 4-5 4H5q-6 0-4.500-6L3.500 4Q4.500 0 8 0Z" fill="url(#c1)" />
              <path d="M8 23h4l3-10h5l-3 15q-1 4-4 4-3 0-4-4Z" fill="#f26a35" />
              <path d="M26 32H13q3 0 4-4l4-15q1-5 5-5h3q6 0 4.500 6L30.500 28q-1 4-4.500 4Z" fill="url(#c2)" />
              <path d="m15 12-3 11q3 1 4-2l3-11q-3-1-4 2Z" fill="#fff" />
            </svg>
          </Copilot>
        </ToolbarActions>
      </Toolbar>

      <PageFrame>
        <Page>
          <GlobalHeader>
            <IconButton><Octicon name="bars" /></IconButton>
            <Logo><Octicon name="github" size={44} color="#1f2328" /></Logo>
            <Breadcrumbs>
              <Crumb $width={172} $spacing={0.14}>is-project-4th-year</Crumb>
              <Slash>/</Slash>
              <Crumb $width={73} $spacing={-0.2}>Projects</Crumb>
              <Slash>/</Slash>
              <Crumb $width={228} $spacing={-0.15} $current>Portfolio Kanban Board</Crumb>
              <Octicon name="lock" size={20} color="#1f2328" />
            </Breadcrumbs>
            <SearchBox>
              <Octicon name="search" />
              <SearchText>Type</SearchText>
              <Kbd>/</Kbd>
              <SearchTail>to search</SearchTail>
            </SearchBox>
            <HeaderRule />
            <HeaderActions>
              <IconButton $width={86}><Octicon name="plus" /><Octicon name="caret" /></IconButton>
              <IconButton><Octicon name="issue" /></IconButton>
              <IconButton><Octicon name="pull" /></IconButton>
              <IconButton><Octicon name="inbox" /><UnreadDot /></IconButton>
              <AccountAvatar><Avatar size={50} /></AccountAvatar>
            </HeaderActions>
          </GlobalHeader>

          <ProjectHeader>
            <ProjectTitle><Octicon name="lock" />Portfolio Kanban Board</ProjectTitle>
            <StatusPill>Add status update</StatusPill>
            <ButtonGroup>
              <GroupButton><Octicon name="graph" color="#1f2328" /></GroupButton>
              <GroupButton><Octicon name="sidebar" color="#1f2328" /></GroupButton>
              <GroupButton><Octicon name="kebab" color="#1f2328" /></GroupButton>
            </ButtonGroup>
          </ProjectHeader>

          <ViewTabs>
            <ViewTab>
              <Octicon name="project" color="#1f2328" />
              <ViewName>View 1</ViewName>
              <ViewMenu><Octicon name="caret" /></ViewMenu>
            </ViewTab>
            <NewView><Octicon name="plus" />New view</NewView>
          </ViewTabs>

          <FilterRow>
            <FilterInput><Octicon name="search" />Filter by keyword or by field</FilterInput>
            <FilterButton>Discard</FilterButton>
            <FilterButton $primary>Save</FilterButton>
          </FilterRow>

          <Board>
            {columns.map((c) => <Column key={c.name} data={c} />)}
            <AddColumn><Octicon name="plus" /></AddColumn>
          </Board>
        </Page>
      </PageFrame>

      <Taskbar>
        <Weather>
          <svg width="42" height="50" viewBox="0 0 42 50">
            <path d="M24.500 26v20" stroke="#d9480f" strokeWidth="3.800" />
            <path d="M20 29h9" stroke="#d9480f" strokeWidth="3" />
            <path d="M6 15.500a5 5 0 0 1 10 0V34a8.500 8.500 0 1 1-10 0Z" fill="#9fd0f7" transform="translate(0 -1)" />
            <path d="M11 20v15" stroke="#d94a72" strokeWidth="4" strokeLinecap="round" /><circle cx="11" cy="39" r="4.800" fill="#1565d8" /><path d="M11 28v10" stroke="#2f5fd0" strokeWidth="4" />
            <circle cx="26.500" cy="14.500" r="12" fill="#ff99a4" />
            <text x="27.500" y="20" fontSize="16" textAnchor="middle" fill="#111">1</text>
          </svg>
        </Weather>
        <Apps>
          {apps.map((a) => (
            <AppSlot key={a.key} $active={a.active}>
              {a.icon}
              {a.badge && <Badge $tone={a.tone ?? "grey"} $wide={a.badge.length > 1}>{a.badge}</Badge>}
              {a.run && <RunMark $active={a.active} />}
            </AppSlot>
          ))}
        </Apps>
        <Tray>
          <TrayItem $gap={0}><Line w={16} h={10} color="#fff" sw={2.2}><path d="m1.500 8.500 6.500-6.500 6.500 6.500" /></Line></TrayItem>
          <TrayItem $gap={27}>
            <Line w={26} h={26} color="#fff" sw={1.5}><path d="M2 10.500A11 11 0 0 1 23 8.500M23.500 1v7.500H16M24 15.500A11 11 0 0 1 3 17.500M2.500 24.500V17.500h7" /><circle cx="19.500" cy="20" r="6" fill="#ff9d0a" stroke="none" /></Line>
          </TrayItem>
          <TrayItem $gap={23}>
            <Line w={25} h={20} color="#fff" sw={2.1}><path d="M1.500 7.500q11-11 22 0M5 11.500q7.500-7.500 15 0M8.500 15q4-4 8 0" /><circle cx="12.500" cy="17.500" r="1.800" fill="#fff" stroke="none" /></Line>
          </TrayItem>
          <TrayItem $gap={10}>
            <Line w={25} h={22} color="#fff" sw={1.7}><path d="M1 8v6q0 1 1 1h3.500l6 5.500V1.500l-6 5.500H2Q1 7 1 8ZM15.500 8q1.800 3 0 6M18.500 4.500q4 6.500 0 13M21.500 1.500q5.500 9.500 0 19" /></Line>
          </TrayItem>
          <TrayItem $gap={11}>
            <Line w={25} h={22} color="#fff" sw={1.9}><path d="M9 6h9.500q2.500 0 2.500 2.500v8q0 2.500-2.500 2.500H5q-2.500 0-2.500-2.500V14" /><path d="M10 8.500h8.500v8H5.500V13Z" fill="#fff" stroke="none" /><path d="M23 10.500v4" strokeWidth="2.500" /><path d="M5.500 0 1 8h3L3 13l5.500-7.500H5.200Z" fill="#fff" strokeWidth=".8" /></Line>
          </TrayItem>
          <Clock>9:31 PM<br />6/27/2025</Clock>
          <svg width="23" height="25" viewBox="0 0 23 25">
            <path d="M10 1q7.500 0 8 8v7l2.500 3v1.500H0V19l2.500-3V9Q3 1 10 1ZM7 22h7q-3.500 4-7 0Z" fill="#fff" />
            <path d="M14 0h9v10h-9z" fill="#282117" />
            <path d="M7.500 7.500h5.500l-5.500 7h6" stroke="#282117" strokeWidth="2" fill="none" /><path d="M15.500 1.500h5.500l-5.500 6h6" stroke="#fff" strokeWidth="1.700" fill="none" />
          </svg>
        </Tray>
      </Taskbar>
    </Screen>
  );
}
